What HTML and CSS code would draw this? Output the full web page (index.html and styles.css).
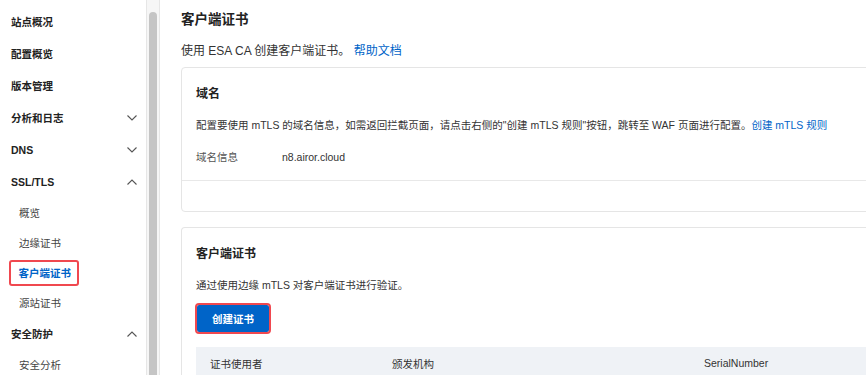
FILE: index.html
```html
<!DOCTYPE html>
<html lang="zh-CN">
<head>
<meta charset="utf-8">
<title>客户端证书</title>
<link rel="stylesheet" href="styles.css">
</head>
<body>
<div class="page">
  <aside class="sidebar">
    <nav class="nav">
      <div class="item top">站点概况</div>
      <div class="item top">配置概览</div>
      <div class="item top">版本管理</div>
      <div class="item top">分析和日志<svg class="chev" viewBox="0 0 10 6"><path d="M0.5 0.5L5 5L9.5 0.5"/></svg></div>
      <div class="item top">DNS<svg class="chev" viewBox="0 0 10 6"><path d="M0.5 0.5L5 5L9.5 0.5"/></svg></div>
      <div class="item top">SSL/TLS<svg class="chev" viewBox="0 0 10 6"><path d="M0.5 5.5L5 1L9.5 5.5"/></svg></div>
      <div class="item sub">概览</div>
      <div class="item sub">边缘证书</div>
      <div class="item sub"><span class="active">客户端证书</span></div>
      <div class="item sub">源站证书</div>
      <div class="item top">安全防护<svg class="chev" viewBox="0 0 10 6"><path d="M0.5 5.5L5 1L9.5 5.5"/></svg></div>
      <div class="item sub">安全分析</div>
    </nav>
    <div class="scrollbar"><div class="thumb"></div></div>
  </aside>
  <main class="main">
    <h1 class="title">客户端证书</h1>
    <p class="subtitle">使用 ESA CA 创建客户端证书。 <a class="link">帮助文档</a></p>
    <section class="card">
      <div class="card-body">
        <h2 class="card-title">域名</h2>
        <p class="desc">配置要使用 mTLS 的域名信息，如需返回拦截页面，请点击右侧的"创建 mTLS 规则"按钮，跳转至 WAF 页面进行配置。<a class="link">创建 mTLS 规则</a></p>
        <div class="info"><span class="label">域名信息</span><span class="value">n8.airor.cloud</span></div>
      </div>
      <div class="card-foot"></div>
    </section>
    <section class="card card2">
      <div class="card-body">
        <h2 class="card-title">客户端证书</h2>
        <p class="desc">通过使用边缘 mTLS 对客户端证书进行验证。</p>
        <button class="btn">创建证书</button>
        <div class="thead">
          <span>证书使用者</span>
          <span>颁发机构</span>
          <span class="latin">SerialNumber</span>
        </div>
      </div>
    </section>
  </main>
</div>
</body>
</html>
```
FILE: styles.css
```css
* { box-sizing: border-box; }
html, body { margin: 0; padding: 0; }
body {
  width: 866px;
  height: 375px;
  overflow: hidden;
  background: #fff;
  font-family: "Liberation Sans", "Noto Sans CJK SC", sans-serif;
  color: #333;
}
.page { display: flex; height: 375px; overflow: hidden; }

.sidebar { display: flex; width: 160px; flex: none; }
.nav { width: 146px; padding-top: 6px; }
.item {
  display: flex;
  align-items: center;
  justify-content: space-between;
  padding: 0 9px 0 11px;
  font-size: 10.5px;
  line-height: 1;
}
.item.top { height: 32px; color: #222; font-weight: 600; }
.item.sub { height: 30px; padding-left: 19px; color: #444; }
.chev { width: 10px; height: 6px; fill: none; stroke: #555; stroke-width: 1.1; }
.active {
  display: inline-block;
  padding: 5.75px 5.5px 5.75px 7.5px;
  margin: -8.25px -8px -8.25px -10px;
  color: #0064c8;
  font-weight: 600;
  border: 2.5px solid #f0484f;
  border-radius: 3px;
}
.scrollbar {
  display: flex;
  flex-direction: column;
  width: 14px;
  background: #f6f6f6;
  border-left: 1px solid #e6e6e6;
  border-right: 1px solid #e6e6e6;
  padding: 12px 2px 0 2px;
}
.thumb { flex: 1; background: #c5c5c5; border-radius: 4px 4px 0 0; }

.main { flex: 1; overflow: hidden; padding-left: 21px; }
.title { margin: 11px 0 0; font-size: 13.5px; line-height: 18px; font-weight: 600; color: #222; }
.subtitle { margin: 14px 0 0; font-size: 12px; line-height: 16px; color: #333; }
.link { color: #0064c8; text-decoration: none; }

.card {
  width: 720px;
  margin-top: 8px;
  border: 1px solid #e5e5e5;
  border-radius: 4px;
}
.card2 { margin-top: 15px; border-bottom: none; border-radius: 4px 4px 0 0; }
.card-body { padding: 18px 14px 0 14px; }
.card-title { margin: 0; font-size: 12px; line-height: 16px; font-weight: 600; color: #222; }
.desc { margin: 15px 0 0; font-size: 10.5px; line-height: 16px; color: #333; }
.info { display: flex; margin-top: 16px; font-size: 10.5px; line-height: 16px; height: 31px; }
.label { width: 86px; color: #555; }
.value { color: #333; }
.card-foot { border-top: 1px solid #e8e8e8; height: 31px; }

.btn {
  display: block;
  margin: 12px 0 0 1px;
  width: 72px;
  height: 27px;
  border: none;
  border-radius: 2px;
  background: #0064c8;
  color: #fff;
  font-family: inherit;
  font-size: 10.5px;
  font-weight: 600;
  outline: 2.5px solid #f0484f;
  outline-offset: 0;
}
.thead {
  display: grid;
  grid-template-columns: 182px 312px 1fr;
  margin-top: 15px;
  padding-left: 14px;
  height: 32px;
  align-items: center;
  background: #eff2f6;
  font-size: 10.5px;
  color: #333;
}
.latin { font-weight: 400; }
```
